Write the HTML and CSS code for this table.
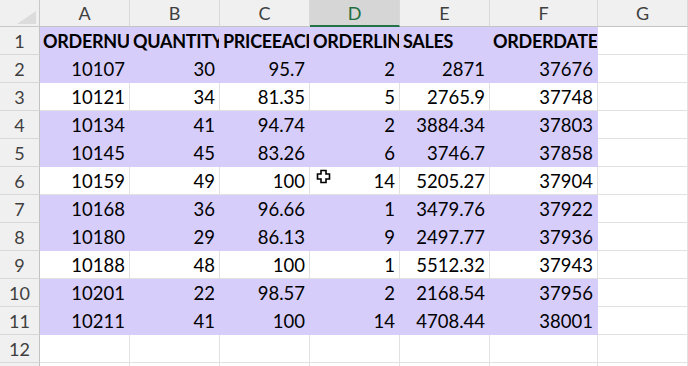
FILE: index.html
```html
<!DOCTYPE html>
<html>
<head>
<meta charset="utf-8">
<link rel="stylesheet" href="styles.css">
</head>
<body>
<div class="sheet">
  <div class="cell corner"><span class="tri"></span></div>
  <div class="cell ch">A</div>
  <div class="cell ch">B</div>
  <div class="cell ch">C</div>
  <div class="cell ch sel">D</div>
  <div class="cell ch">E</div>
  <div class="cell ch">F</div>
  <div class="cell ch">G</div>

  <div class="cell rh">1</div>
  <div class="cell t p">ORDERNUMBER</div>
  <div class="cell t p">QUANTITYORDERED</div>
  <div class="cell t p">PRICEEACH</div>
  <div class="cell t p">ORDERLINENUMBER</div>
  <div class="cell t p">SALES</div>
  <div class="cell t p">ORDERDATE</div>
  <div class="cell"></div>

  <div class="cell rh">2</div>
  <div class="cell n p">10107</div><div class="cell n p">30</div><div class="cell n p">95.7</div><div class="cell n p">2</div><div class="cell n p">2871</div><div class="cell n p">37676</div><div class="cell"></div>

  <div class="cell rh">3</div>
  <div class="cell n">10121</div><div class="cell n">34</div><div class="cell n">81.35</div><div class="cell n">5</div><div class="cell n">2765.9</div><div class="cell n">37748</div><div class="cell"></div>

  <div class="cell rh">4</div>
  <div class="cell n p">10134</div><div class="cell n p">41</div><div class="cell n p">94.74</div><div class="cell n p">2</div><div class="cell n p">3884.34</div><div class="cell n p">37803</div><div class="cell"></div>

  <div class="cell rh">5</div>
  <div class="cell n p">10145</div><div class="cell n p">45</div><div class="cell n p">83.26</div><div class="cell n p">6</div><div class="cell n p">3746.7</div><div class="cell n p">37858</div><div class="cell"></div>

  <div class="cell rh">6</div>
  <div class="cell n">10159</div><div class="cell n">49</div><div class="cell n">100</div><div class="cell n">14</div><div class="cell n">5205.27</div><div class="cell n">37904</div><div class="cell"></div>

  <div class="cell rh">7</div>
  <div class="cell n p">10168</div><div class="cell n p">36</div><div class="cell n p">96.66</div><div class="cell n p">1</div><div class="cell n p">3479.76</div><div class="cell n p">37922</div><div class="cell"></div>

  <div class="cell rh">8</div>
  <div class="cell n p">10180</div><div class="cell n p">29</div><div class="cell n p">86.13</div><div class="cell n p">9</div><div class="cell n p">2497.77</div><div class="cell n p">37936</div><div class="cell"></div>

  <div class="cell rh">9</div>
  <div class="cell n">10188</div><div class="cell n">48</div><div class="cell n">100</div><div class="cell n">1</div><div class="cell n">5512.32</div><div class="cell n">37943</div><div class="cell"></div>

  <div class="cell rh">10</div>
  <div class="cell n p">10201</div><div class="cell n p">22</div><div class="cell n p">98.57</div><div class="cell n p">2</div><div class="cell n p">2168.54</div><div class="cell n p">37956</div><div class="cell"></div>

  <div class="cell rh">11</div>
  <div class="cell n p">10211</div><div class="cell n p">41</div><div class="cell n p">100</div><div class="cell n p">14</div><div class="cell n p">4708.44</div><div class="cell n p">38001</div><div class="cell"></div>

  <div class="cell rh">12</div>
  <div class="cell"></div><div class="cell"></div><div class="cell"></div><div class="cell"></div><div class="cell"></div><div class="cell"></div><div class="cell"></div>

  <div class="cell rh"></div>
  <div class="cell"></div><div class="cell"></div><div class="cell"></div><div class="cell"></div><div class="cell"></div><div class="cell"></div><div class="cell"></div>

  <svg class="cursor" width="15" height="15" viewBox="0 0 15 15">
    <path d="M5 1.5 H10 V5 H13.5 V10 H10 V13.5 H5 V10 H1.5 V5 H5 Z" fill="#fff" stroke="#000" stroke-width="1.6" stroke-linejoin="miter"/>
  </svg>
</div>
</body>
</html>
```

FILE: styles.css
```css
html, body {
  margin: 0;
  padding: 0;
  background: #fff;
  overflow: hidden;
}

.sheet {
  position: relative;
  display: grid;
  grid-template-columns: 40px 90px 90px 90px 90px 90px 108px 90px;
  grid-template-rows: 27px repeat(13, 28px);
  width: 688px;
  height: 366px;
  overflow: hidden;
  font-family: Lato, "Open Sans", "Liberation Sans", sans-serif;
  font-size: 18.5px;
  color: #000;
}

.cell {
  box-sizing: border-box;
  border-right: 1px solid #e1e1e1;
  border-bottom: 1px solid #e1e1e1;
  overflow: hidden;
  white-space: nowrap;
  display: flex;
  align-items: center;
  padding: 1px 4px 0 3px;
  line-height: 1;
}

.corner {
  background: #f0f0f0;
  border-right: 1px solid #c8c8c8;
  border-bottom: 1px solid #c8c8c8;
  position: relative;
  padding: 0;
}

.tri {
  position: absolute;
  right: 3px;
  bottom: 2px;
  width: 0;
  height: 0;
  border-left: 19px solid transparent;
  border-bottom: 13px solid #dcdcdc;
}

.ch {
  background: #f0f0f0;
  color: #3f3f3f;
  justify-content: center;
  border-right: 1px solid #d9d9d9;
  border-bottom: 1px solid #c3c3c3;
  padding: 0;
  font-size: 18px;
}

.ch.sel {
  background: #d6d6d6;
  color: #1e6e3f;
  border-bottom: 2px solid #217346;
  padding-top: 1px;
}

.rh {
  background: #f0f0f0;
  color: #3f3f3f;
  justify-content: center;
  border-right: 1px solid #c3c3c3;
  border-bottom: 1px solid #d9d9d9;
  padding: 1px 0 0 0;
  font-size: 18px;
}

.n {
  justify-content: flex-end;
}

.t {
  font-weight: 700;
  font-size: 18px;
  letter-spacing: -0.3px;
  justify-content: flex-start;
}

.p {
  background: #d6cdfa;
  border-color: transparent;
}

.cursor {
  position: absolute;
  left: 316px;
  top: 169px;
}
```
